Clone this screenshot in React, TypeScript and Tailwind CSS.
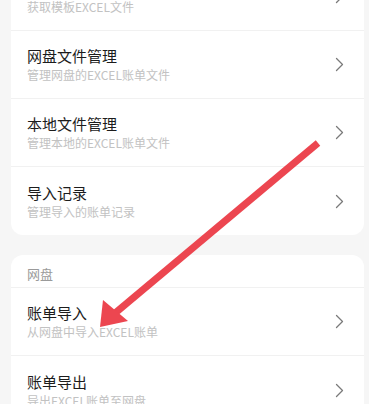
import React from "react";

const Chevron = () => (
  <svg width="9" height="15" viewBox="0 0 9 15" fill="none" className="shrink-0">
    <path d="M1.5 1.5L7.5 7.5L1.5 13.5" stroke="#7a7a7a" strokeWidth="1.3" strokeLinecap="round" strokeLinejoin="round" />
  </svg>
);

type RowProps = { title: string; sub: string; last?: boolean };

const Row = ({ title, sub, last }: RowProps) => (
  <div className={`flex items-center h-[68px] pl-[16px] pr-[20px] ${last ? "" : "border-b border-[#f1f1f1]"}`}>
    <div className="flex-1 flex flex-col">
      <div className="text-[15px] leading-[19px] text-[#1c1c1c]">{title}</div>
      <div className="text-[12px] leading-[16px] text-[#c2c2c2] mt-[2px]">{sub}</div>
    </div>
    <Chevron />
  </div>
);

export default function App() {
  return (
    <div
      className="relative w-[369px] h-[404px] overflow-hidden bg-[#f6f6f6]"
      style={{ fontFamily: '"Noto Sans CJK SC", "Noto Sans", sans-serif' }}
    >
      <div className="-mt-[37px] flex flex-col gap-[20px] ml-[11px] mr-[5px]">
        <div className="bg-white rounded-[12px] flex flex-col">
          <Row title="获取模板" sub="获取模板EXCEL文件" />
          <Row title="网盘文件管理" sub="管理网盘的EXCEL账单文件" />
          <Row title="本地文件管理" sub="管理本地的EXCEL账单文件" />
          <Row title="导入记录" sub="管理导入的账单记录" last />
        </div>
        <div className="bg-white rounded-[12px] flex flex-col">
          <div className="h-[33px] flex items-center pt-[6px] pl-[16px] text-[13px] text-[#9a9a9a] border-b border-[#f1f1f1]">网盘</div>
          <Row title="账单导入" sub="从网盘中导入EXCEL账单" />
          <Row title="账单导出" sub="导出EXCEL账单至网盘" last />
        </div>
      </div>
      <svg className="absolute left-0 top-0 pointer-events-none" width="369" height="404" viewBox="0 0 369 404">
        <line x1="318" y1="143" x2="114" y2="314" stroke="#ec4650" strokeWidth="7" strokeLinecap="butt" />
        <polygon points="100,327 103,300 128,321" fill="#ec4650" />
      </svg>
    </div>
  );
}
